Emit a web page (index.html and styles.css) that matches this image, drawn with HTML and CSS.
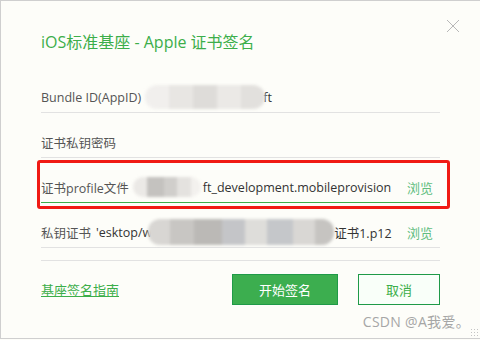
FILE: index.html
```html
<!DOCTYPE html>
<html lang="zh-CN">
<head>
    <meta charset="UTF-8">
    <meta name="viewport" content="width=device-width, initial-scale=1.0">
    <title>iOS标准基座 - Apple 证书签名</title>
    <link rel="stylesheet" href="styles.css">
</head>
<body>

    <div class="dialog">
        <div class="title-bar">
            <h1 class="title">iOS标准基座 - Apple 证书签名</h1>
            <span class="close">
                <svg width="14" height="14" viewBox="0 0 14 14">
                    <path d="M1 1 L13 13 M13 1 L1 13" stroke="#b8b8b8" stroke-width="1" fill="none"/>
                </svg>
            </span>
        </div>

        <div class="form">
            <div class="row">
                <span class="label">Bundle ID(AppID)</span>
                <span class="value"><span class="mosaic mosaic-id"></span>ft</span>
            </div>
            <div class="row">
                <span class="label">证书私钥密码</span>
            </div>
            <div class="row active">
                <span class="label">证书profile文件</span>
                <span class="value"><span class="mosaic mosaic-profile"></span>ft_development.mobileprovision</span>
                <a class="browse" href="#">浏览</a>
            </div>
            <div class="row">
                <span class="label">私钥证书</span>
                <span class="value"><span class="cut">'esktop/w</span><span class="mosaic mosaic-key"></span>证书1.p12</span>
                <a class="browse" href="#">浏览</a>
            </div>
            <div class="row spacer"></div>
        </div>

        <div class="footer">
            <a class="guide" href="#">基座签名指南</a>
            <div class="buttons">
                <button class="btn btn-primary">开始签名</button>
                <button class="btn btn-cancel">取消</button>
            </div>
        </div>

        <!-- 截图标注框 -->
        <div class="mark"></div>
        <div class="watermark">CSDN @A我爱。</div>
        <div class="grip"></div>
    </div>

</body>
</html>
```

FILE: styles.css
```css
body {
    margin: 0;
    font-family: "Open Sans", "Noto Sans CJK SC", sans-serif;
    font-size: 13px;
    color: #333;
    background-color: #fdfdf9;
}

.dialog {
    position: relative;
    box-sizing: border-box;
    width: 480px;
    height: 339px;
    border: 1px solid #cfcfcf;
    border-right: none;
    background-color: #fdfdf9;
    padding: 0 40px 0 40px;
}

.title-bar {
    display: flex;
    justify-content: space-between;
    align-items: flex-start;
    height: 67px;
}

.title {
    margin: 30px 0 0 0;
    font-size: 16px;
    font-weight: normal;
    color: #3cae4a;
    line-height: 22px;
}

.close {
    margin: 18px -20px 0 0;
    display: flex;
}

.form {
    display: flex;
    flex-direction: column;
}

.row {
    display: flex;
    align-items: center;
    height: 45px;
    padding-top: 14px;
    box-sizing: border-box;
    border-bottom: 1px solid #e2e2e2;
    white-space: nowrap;
    font-size: 12.5px;
}

.row.active {
    border-bottom-color: #3cae4a;
}

.row.spacer {
    height: 13px;
    padding: 0;
}

.label {
    color: #555;
    margin-right: 4px;
}

.value {
    display: flex;
    align-items: center;
    flex: 1;
    color: #333;
}

.cut {
    margin-left: 1px;
}

.mosaic {
    display: inline-block;
    height: 24px;
    border-radius: 12px;
    filter: blur(1.5px);
}

.mosaic-id {
    width: 120px;
    margin-right: -2px;
    background: linear-gradient(90deg, #f1efed 0 20%, #e8e6e3 20% 40%, #dedcd9 40% 60%, #ebe9e6 60% 80%, #e2e0dd 80%);
}

.mosaic-profile {
    width: 68px;
    height: 20px;
    margin-right: 2px;
    background: linear-gradient(90deg, #ebe9e6 0 20%, #c4c2bf 20% 45%, #d0cecb 45% 65%, #e4e2df 65% 85%, #f3f1ee 85%);
}

.mosaic-key {
    width: 186px;
    height: 26px;
    margin-left: -4px;
    background: linear-gradient(90deg, #d8d6d3 0 12%, #c8c6c3 12% 25%, #bbb9b6 25% 40%, #c4c5c8 40% 52%, #deddda 52% 64%, #c5c7ca 64% 78%, #d9d7d4 78% 90%, #c6c4c1 90%);
}

.browse {
    margin-right: 7px;
    font-size: 13px;
    color: #62bd80;
    text-decoration: none;
}

.footer {
    display: flex;
    justify-content: space-between;
    align-items: center;
    margin-top: 13px;
}

.guide {
    color: #3cae4a;
    text-decoration: underline;
}

.buttons {
    display: flex;
    gap: 20px;
}

.btn {
    box-sizing: border-box;
    height: 31px;
    font-family: "Open Sans", "Noto Sans CJK SC", sans-serif;
    font-size: 13px;
    border: 1px solid #1f9a48;
    cursor: pointer;
}

.btn-primary {
    width: 106px;
    background-color: #3cae4f;
    color: #fff;
}

.btn-cancel {
    width: 82px;
    background-color: #f9fff9;
    color: #3cae4a;
}

.mark {
    position: absolute;
    left: 36px;
    top: 159px;
    width: 407px;
    height: 43px;
    border: 3px solid #f01a14;
    border-radius: 3px;
}

.watermark {
    position: absolute;
    right: 10px;
    bottom: 7px;
    font-size: 14px;
    color: #a6a6a6;
    letter-spacing: 0.3px;
}

.grip {
    position: absolute;
    right: 2px;
    bottom: 2px;
    width: 8px;
    height: 8px;
    background-image: radial-gradient(#c4c4c4 0.8px, transparent 1px);
    background-size: 3px 3px;
}
```
